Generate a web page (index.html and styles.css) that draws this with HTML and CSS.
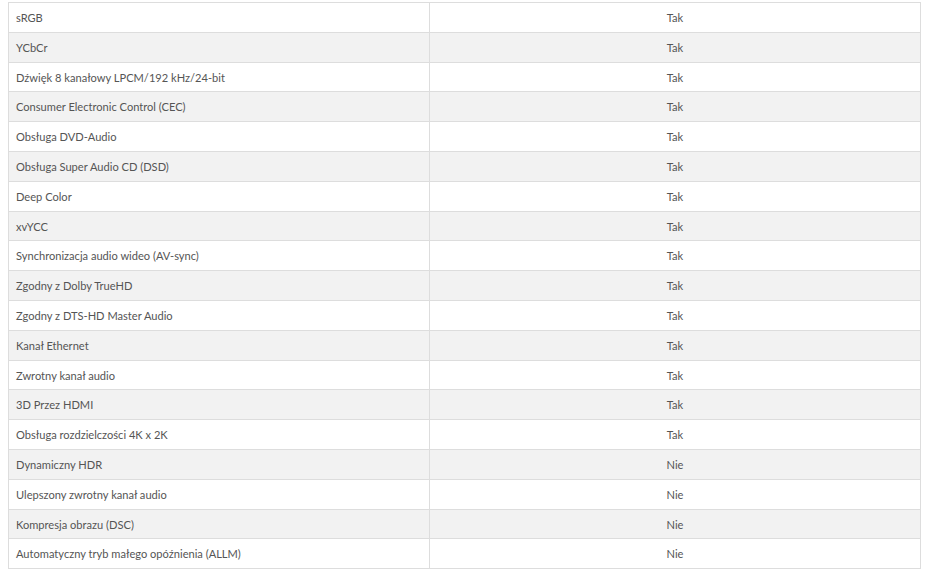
FILE: index.html
```html
<!DOCTYPE html>
<html lang="pl">
<head>
<meta charset="utf-8">
<link rel="stylesheet" href="styles.css">
<title>Specyfikacja</title>
</head>
<body>
<table class="spec">
<tbody>
<tr><td class="name">sRGB</td><td class="val">Tak</td></tr>
<tr><td class="name">YCbCr</td><td class="val">Tak</td></tr>
<tr><td class="name">Dźwięk 8 kanałowy LPCM/192 kHz/24-bit</td><td class="val">Tak</td></tr>
<tr><td class="name">Consumer Electronic Control (CEC)</td><td class="val">Tak</td></tr>
<tr><td class="name">Obsługa DVD-Audio</td><td class="val">Tak</td></tr>
<tr><td class="name">Obsługa Super Audio CD (DSD)</td><td class="val">Tak</td></tr>
<tr><td class="name">Deep Color</td><td class="val">Tak</td></tr>
<tr><td class="name">xvYCC</td><td class="val">Tak</td></tr>
<tr><td class="name">Synchronizacja audio wideo (AV-sync)</td><td class="val">Tak</td></tr>
<tr><td class="name">Zgodny z Dolby TrueHD</td><td class="val">Tak</td></tr>
<tr><td class="name">Zgodny z DTS-HD Master Audio</td><td class="val">Tak</td></tr>
<tr><td class="name">Kanał Ethernet</td><td class="val">Tak</td></tr>
<tr><td class="name">Zwrotny kanał audio</td><td class="val">Tak</td></tr>
<tr><td class="name">3D Przez HDMI</td><td class="val">Tak</td></tr>
<tr><td class="name">Obsługa rozdzielczości 4K x 2K</td><td class="val">Tak</td></tr>
<tr><td class="name">Dynamiczny HDR</td><td class="val">Nie</td></tr>
<tr><td class="name">Ulepszony zwrotny kanał audio</td><td class="val">Nie</td></tr>
<tr><td class="name">Kompresja obrazu (DSC)</td><td class="val">Nie</td></tr>
<tr><td class="name">Automatyczny tryb małego opóźnienia (ALLM)</td><td class="val">Nie</td></tr>
</tbody>
</table>
</body>
</html>
```
FILE: styles.css
```css
html, body {
  margin: 0;
  padding: 0;
  background: #ffffff;
}
body {
  padding: 2px 0 0 8px;
  font-family: Lato, "Open Sans", "Liberation Sans", sans-serif;
  font-size: 11.1px;
  color: #555555;
}
.spec {
  border-collapse: collapse;
  width: 913px;
  table-layout: fixed;
}
.spec td {
  border: 1px solid #dddddd;
  padding: 7px 7px 5px 7px;
  line-height: 16.8px;
  height: 16.8px;
  box-sizing: content-box;
}
.spec .name {
  width: 406px;
  text-align: left;
}
.spec .val {
  text-align: center;
}
.spec tr:nth-child(even) td {
  background: #f2f2f2;
}
```
